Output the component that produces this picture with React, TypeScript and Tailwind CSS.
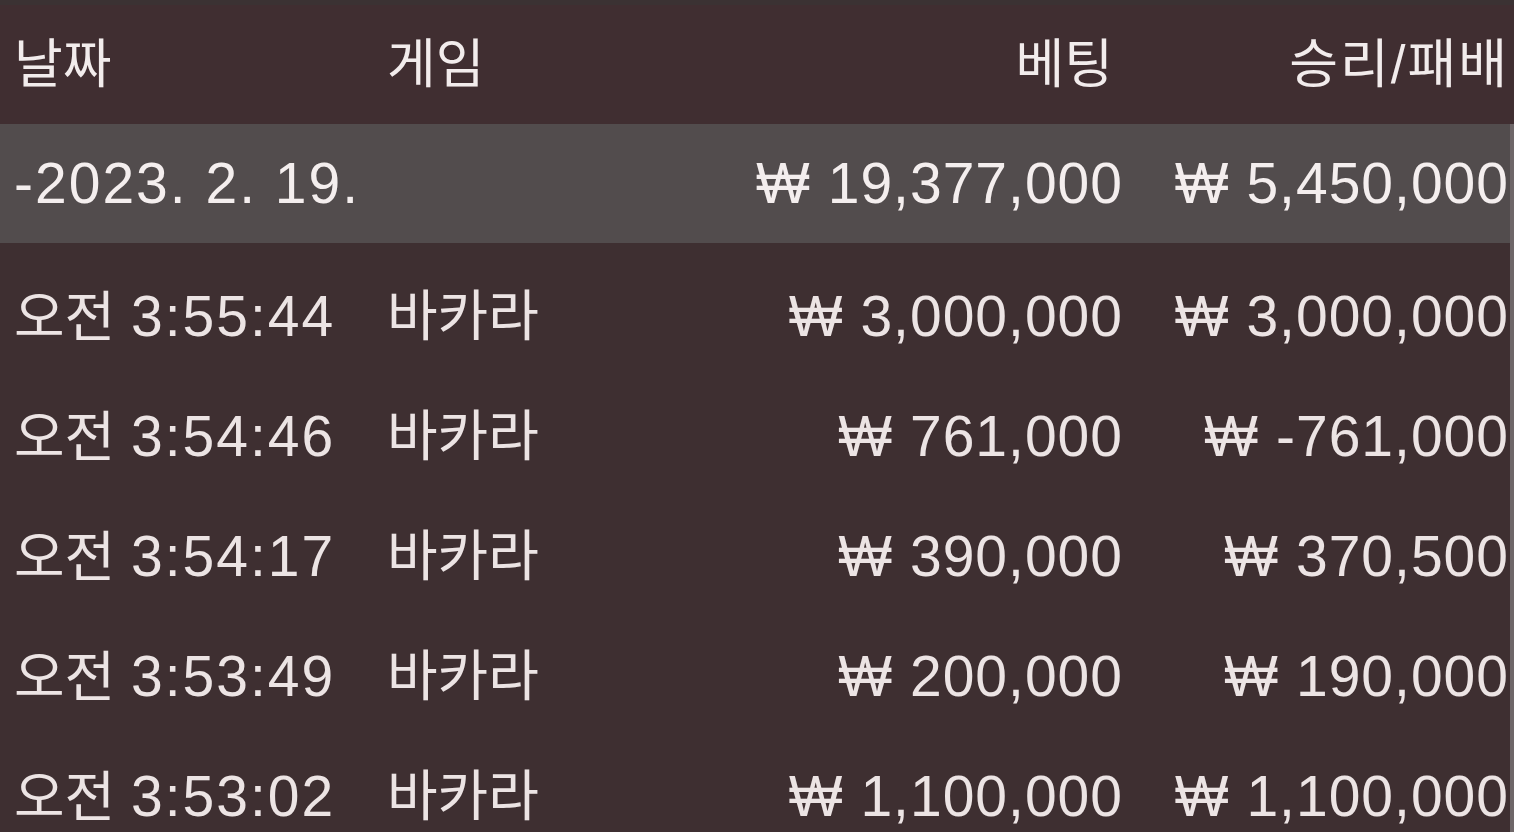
import React from "react";

const rows = [
  { ampm: "오전", time: "3:55:44", game: "바카라", bet: "₩ 3,000,000", win: "₩ 3,000,000" },
  { ampm: "오전", time: "3:54:46", game: "바카라", bet: "₩ 761,000", win: "₩ -761,000" },
  { ampm: "오전", time: "3:54:17", game: "바카라", bet: "₩ 390,000", win: "₩ 370,500" },
  { ampm: "오전", time: "3:53:49", game: "바카라", bet: "₩ 200,000", win: "₩ 190,000" },
  { ampm: "오전", time: "3:53:02", game: "바카라", bet: "₩ 1,100,000", win: "₩ 1,100,000" },
];

const font = {
  fontFamily: '"Liberation Sans", "Noto Sans CJK KR", sans-serif',
};

export default function App() {
  return (
    <div
      className="w-[1514px] h-[832px] overflow-hidden bg-[#3e2f31] text-[#ece4e4] relative"
      style={font}
    >
      {/* header */}
      <div className="h-[124px] bg-[#402e31] border-t-[5px] border-[#3b3233] flex items-center pl-[14px] pr-[5px] text-[53px] text-[#f2ecec] leading-none">
        <div className="w-[373px] whitespace-nowrap">날짜</div>
        <div className="flex-1 whitespace-nowrap">게임</div>
        <div className="w-[386px] text-right pr-[10px] whitespace-nowrap">베팅</div>
        <div className="w-[386px] text-right whitespace-nowrap tracking-[2px]">승리/패배</div>
      </div>
      {/* summary */}
      <div className="h-[119px] bg-[#524c4d] mr-[4px] flex items-center pl-[14px] pr-[1px] text-[57px] leading-none text-[#f4eeee]">
        <div className="w-[373px] whitespace-nowrap tracking-[2px]">-2023. 2. 19.</div>
        <div className="flex-1" />
        <div className="w-[386px] text-right whitespace-nowrap tracking-[1px]">₩ 19,377,000</div>
        <div className="w-[386px] text-right whitespace-nowrap tracking-[1px]">₩ 5,450,000</div>
      </div>
      <div className="pt-[13px] pr-[4px]">
        {rows.map((r, i) => (
          <div
            key={i}
            className="h-[120px] flex items-center pl-[14px] pr-[1px] text-[57px] leading-none"
          >
            <div className="w-[373px] whitespace-nowrap">
              <span className="text-[55px]">{r.ampm}</span>{" "}
              <span className="tracking-[2px]">{r.time}</span>
            </div>
            <div className="flex-1 whitespace-nowrap text-[55px]">{r.game}</div>
            <div className="w-[386px] text-right whitespace-nowrap tracking-[1px]">{r.bet}</div>
            <div className="w-[386px] text-right whitespace-nowrap tracking-[1px]">{r.win}</div>
          </div>
        ))}
      </div>
      <div className="absolute right-0 top-[124px] bottom-0 w-[4px] bg-[#6e6668]" />
    </div>
  );
}
